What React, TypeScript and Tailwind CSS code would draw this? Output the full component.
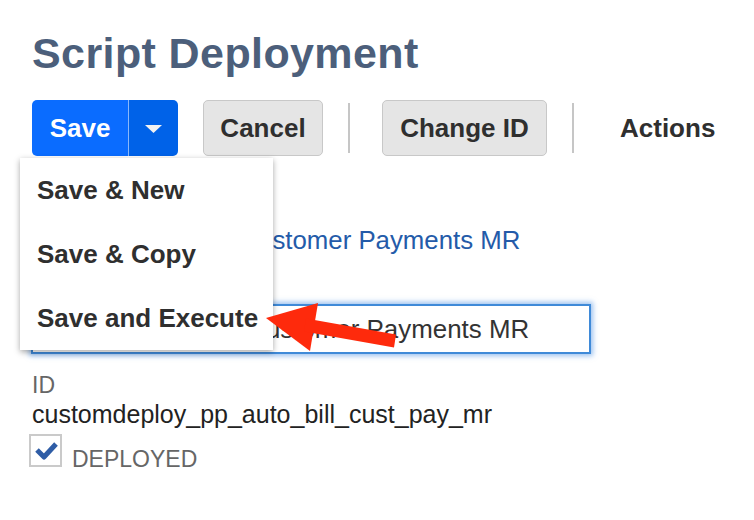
export default function App() {
  const scriptName = "PP - Auto Billing - Customer Payments MR";

  return (
    <div className="relative h-[520px] w-[754px] overflow-hidden bg-white pl-[32px] pt-[32px] font-['Liberation_Sans',Arial,sans-serif]">
      {/* Page title */}
      <h1 className="text-[43px] font-bold leading-[43px] tracking-[0.4px] text-[#4c5f7b]">Script Deployment</h1>

      {/* Button bar */}
      <div className="mt-[25px] flex h-[56px] items-center">
        <div className="flex h-[56px] overflow-hidden rounded-[5px]">
          <button className="h-full w-[96px] bg-[#0a6cff] text-[26px] font-bold text-white">Save</button>
          <div className="h-full w-px bg-[#8ab8fb]" />
          <button className="flex h-full w-[49px] items-center justify-center bg-[#0062e8]">
            <svg width="17" height="8" viewBox="0 0 17 8" className="mt-[2px]">
              <path d="M0 0 H17 L8.5 8 Z" fill="#f2f2f2" />
            </svg>
          </button>
        </div>
        <button className="ml-[25px] h-[56px] w-[120px] rounded-[5px] border border-[#c8c8c8] bg-[#e5e5e5] text-[26px] font-bold text-[#2f2f2f]">
          Cancel
        </button>
        <div className="ml-[25px] h-[50px] w-[2px] bg-[#c6c6c6]" />
        <button className="ml-[32px] h-[56px] w-[165px] rounded-[5px] border border-[#c8c8c8] bg-[#e5e5e5] text-[26px] font-bold text-[#2f2f2f]">
          Change ID
        </button>
        <div className="ml-[25px] h-[50px] w-[2px] bg-[#c6c6c6]" />
        <button className="ml-[46px] text-[26px] font-bold text-[#2f2f2f]">Actions</button>
      </div>

      {/* Fields (labels for script and title sit under the open menu) */}
      <div className="mt-[69px] h-[30px] text-[25.8px] leading-[30px] text-[#245ba9]">{scriptName}</div>

      <div className="ml-[-1px] mt-[49px] h-[50px] w-[560px] border-2 border-[#3f8ad8] pl-[6px] text-[25.9px] leading-[46px] text-[#333] shadow-[0_0_5px_2px_rgba(74,144,226,0.55)]">
        {scriptName}
      </div>

      <div className="mt-[17px] h-[28px] text-[23px] leading-[28px] text-[#666]">ID</div>
      <div className="h-[30px] text-[25px] leading-[30px] text-[#222]">customdeploy_pp_auto_bill_cust_pay_mr</div>

      <div className="ml-[-3px] mt-[5px] flex items-start">
        <div className="flex h-[33px] w-[33px] items-center justify-center border-2 border-[#cacaca] bg-white">
          <svg width="26" height="20" viewBox="0 0 26 20">
            <path d="M4 9 L11 16 L23 3" fill="none" stroke="#2f5da6" strokeWidth="5" strokeLinejoin="round" />
          </svg>
        </div>
        <span className="ml-[10px] mt-[11px] text-[23px] leading-[28px] text-[#666]">DEPLOYED</span>
      </div>

      {/* Save dropdown menu */}
      <div className="absolute left-[20px] top-[158px] w-[253px] bg-white shadow-[0_2px_6px_rgba(0,0,0,0.35)]">
        {["Save & New", "Save & Copy", "Save and Execute"].map((item) => (
          <div key={item} className="h-[64px] pl-[17px] text-[26px] font-bold leading-[64px] text-[#2f2f2f]">
            {item}
          </div>
        ))}
      </div>

      {/* Red annotation arrow */}
      <svg className="pointer-events-none absolute left-0 top-0" width="754" height="520" viewBox="0 0 754 520">
        <polygon points="266,318 318,303 310,351" fill="#fe2a0c" />
        <polygon points="306,318.6 396,334.6 394,347.4 304,331.4" fill="#fe2a0c" />
      </svg>
    </div>
  );
}
